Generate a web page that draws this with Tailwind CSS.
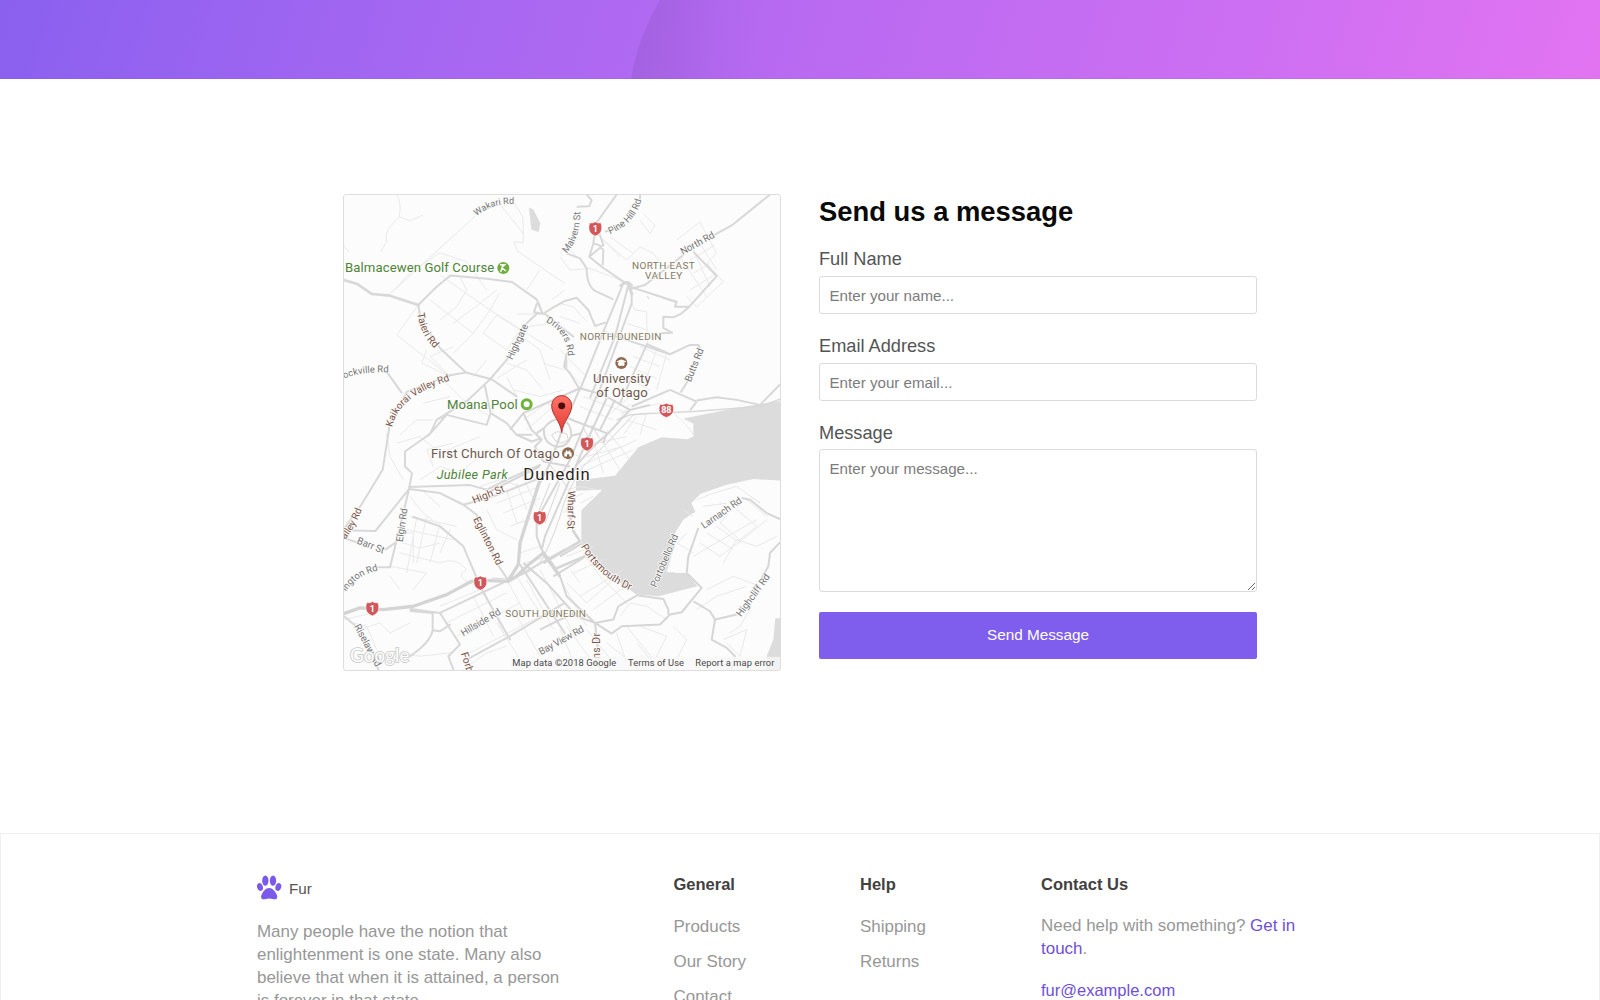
<!DOCTYPE html>
<html lang="en">
<head>
<meta charset="utf-8">
<title>Fur - Contact</title>
<script src="https://cdn.jsdelivr.net/npm/@tailwindcss/browser@4"></script>
</head>
<body class="h-screen overflow-hidden bg-white font-['Liberation_Sans',Arial,sans-serif] text-[#545454]">
<header class="h-[79px] w-full bg-[linear-gradient(107deg,#8a60ef_0%,#a567f1_27%,#b86af1_50%,#cd6ff2_78%,#e274f1_100%)]">
  <svg class="block h-full w-full" viewBox="0 0 1600 79">
    <defs><linearGradient id="arc" gradientUnits="userSpaceOnUse" x1="640" y1="0" x2="770" y2="8"><stop offset="0" stop-color="#8f58c8" stop-opacity=".36"/><stop offset=".25" stop-color="#8f58c8" stop-opacity=".3"/><stop offset=".6" stop-color="#8f58c8" stop-opacity=".1"/><stop offset="1" stop-color="#8f58c8" stop-opacity="0"/></linearGradient></defs>
    <path d="M660 0Q638 37 631 79H780V0Z" fill="url(#arc)"/>
    <path d="M0 78.500H1600" stroke="#8050b0" stroke-opacity=".1"/>
  </svg>
</header>
<main class="mx-auto flex h-[754px] w-[914px] gap-[38px] pt-[115px]">
  <div class="h-[477px] w-[438px] shrink-0 overflow-hidden rounded-[3px] border border-[#dedede] bg-[#fcfcfc]">
  <svg class="block h-full w-full font-[Roboto,sans-serif]" viewBox="12 14.500 1308 1427" preserveAspectRatio="none">
    <defs>
      <g id="shield"><path d="M-17-18Q-8-16 0-21Q8-16 17-18Q21-8 19 3Q16 16 0 22Q-16 16-19 3Q-21-8-17-18Z" fill="#d1575a" stroke="#fff" stroke-width="2"/></g>
      <path id="wakari" d="M410 78Q458 36 528 42"/><path id="taieri" d="M232 370Q242 446 300 490"/>
      <path id="drivers" d="M617 396Q680 425 684 500"/><path id="kaik" d="M156 712Q178 612 350 566"/>
      <path id="malvern" d="M20 190Q66 138 60 50"/><path id="pine" d="M150 132Q232 98 247 16"/>
      <path id="ports" d="M62 350Q118 450 230 490"/><path id="elley" d="M16 330Q54 280 74 216"/>
      <path id="ockville" d="M12 566Q70 543 150 548"/><path id="ington" d="M18 486Q48 436 124 420"/>
      <linearGradient id="pin" x2="0" y2="1"><stop stop-color="#ff7468"/><stop offset="1" stop-color="#e23d36"/></linearGradient>
    </defs>
    <!-- harbour and reservoirs -->
    <g fill="#dcdcdc">
      <path d="M1320 633L1200 652L1030 686L1060 702V740L1042 748L965 742L895 772L825 858L708 872V903L787 900L724 962V1058Q735 1088 800 1150L888 1214L955 1220L1072 1190L1038 1150H1005L1005 1030L1030 990L1066 966L1054 940L1082 912L1160 885L1240 868L1320 872Z"/>
      <path d="M567 52L580 58L601 99L596 126L574 119Z"/><path d="M1320 1286H1306L1300 1350L1280 1400V1444H1320Z"/>
      <path d="M674 510l8-4v28l-8-4z"/><path d="M922 317l7 6-2 4-7-6z"/>
    </g>
    <path d="M1040 1148L980 1148Q1010 1036 1048 975" fill="#fcfcfc"/>
    <!-- residential streets -->
    <g fill="none" stroke="#e9e9e9" stroke-width="3">
      <path d="M170 13Q185 40 178 80L150 110Q135 125 140 155L122 185M178 80L210 92L248 75M12 168L26 185M405 78L150 312M150 312L220 240L300 188L380 215L440 300M470 30L550 130L548 80L510 20M550 130V158L522 155L532 182L600 230L674 280M300 255L450 360L640 480M235 345L170 435L330 560M270 330L400 430L450 360L478 310M400 430L340 490M340 400L420 340L470 300M300 390L350 350L380 300L360 262M470 375L540 420L500 480L430 430ZM530 372L600 372M560 410L640 400M545 440L600 480L630 570M500 520L560 540L610 600M470 565L560 510M560 300L600 240M635 330L674 300M260 480L245 520L330 560L270 500L340 470M440 510L400 560M500 560L530 620M610 520L674 540"/>
      <path d="M320 580L380 640L450 680M250 640L330 620M520 600L600 620L670 600M550 690L620 640L674 660M560 720L674 620M180 735L230 690L280 690"/>
      <path d="M140 730L150 800L190 870M170 760L240 740L300 790L420 740M240 870L300 830L360 850L440 780L500 800M280 830L260 780L340 760M420 890L480 870L540 890M210 920L240 960L300 1010M250 905L300 950M210 980L350 1010M200 1020L340 1050M190 1060L240 1075L300 1060M180 1090L300 1120M230 985L200 1150M260 980L230 1120M300 1000L270 1120M330 1020L300 1090M150 1130L260 1150L220 1200M170 1030H220V1120M150 1160L180 1200M300 1120Q350 1100 380 1140Q340 1160 400 1185M440 960L470 1020L530 1050M500 900L530 1000L570 990M530 880L560 960M555 875L590 950M470 940L600 890M490 970L600 925M510 1010L590 980M540 1090L600 1070M550 1120L630 1100"/>
      <path d="M300 1250L420 1200M320 1300L500 1210M350 1340L540 1240M370 1400L640 1260M400 1220L460 1340M430 1200L500 1350M500 1170L560 1280M530 1160L600 1270M560 1170L640 1320M600 1140L700 1330M640 1130L740 1310M520 1260L600 1400M470 1300L560 1440M370 1440L440 1390L500 1370M150 1420Q200 1390 240 1400L330 1390M12 1290L100 1270M60 1320L120 1300L150 1330L210 1300M40 1300L80 1310L110 1380"/>
    </g>
    <g fill="none" stroke="#e9e9e9" stroke-width="3" transform="translate(660 0)">
      <path d="M120 140L200 210L240 170L280 190L310 230M250 70L285 105L270 130L240 90M130 150L180 200M150 140L220 190M350 150L420 95L470 190L440 220L490 275L410 350L380 320M370 170L440 140M390 210L465 165M400 250L450 220M390 300L470 250M400 180L450 290M420 160L470 240M360 200L440 320M240 300L350 340M0 200L30 240L90 235L180 270M50 200L20 170M0 340L40 350L80 395M0 380L60 400M215 340L225 360L260 365L262 470M200 400L262 420M240 470L330 510M220 500L300 530M210 530L290 565M190 560L270 600M0 480L80 560M10 530L70 590M290 480L250 590M320 490L290 600M70 620L190 665M60 650L160 690M210 640L160 720M140 680L210 620M180 670L300 640M200 690L290 720M230 680L190 735M260 670L240 735M340 670Q380 700 400 735"/>
    </g>
    <g fill="none" stroke="#e8e8e8" stroke-width="3" transform="translate(660 720)">
      <path d="M60 110L230 30M80 80L190 50M70 50L200 20M60 130L220 60M110 10L180 120M140 0L210 90M95 15L130 130M20 380L100 350M40 430L130 390M20 460L80 520L160 450M60 500L190 420M100 540L210 460M70 370L120 440L200 520M30 420L60 460M180 560L210 520L260 530L320 570M200 590L280 690M170 610L200 700M240 590L320 620L280 700L230 640M140 640L240 720M340 590L380 630L350 690M80 600L160 700M410 540L470 500L560 470M440 480L520 440L600 470L570 530L520 560M400 380L450 350L520 310L590 270M420 340L480 380L560 320L620 270M440 310L520 360M470 290L540 340M520 230L590 290L540 330L480 280ZM560 210L620 260M410 210L460 190L530 170L600 220L570 200M430 230L500 220M400 260L370 240M380 310L350 340L400 370M490 400L530 330L590 350L650 320M510 610L540 590L570 540M490 630L560 600L540 680L500 640M0 600L50 720M20 590L100 700"/>
      <path d="M60 220L100 200M20 180L60 170L110 180M10 250L50 200L70 190M0 60L60 80"/>
    </g>
    <!-- arterial roads -->
    <g fill="none" stroke="#d8d8d8" stroke-width="6" stroke-linejoin="round" stroke-linecap="round">
      <path d="M12 270L52 282L96 312L150 317L235 345" stroke-width="8"/>
      <path d="M235 345L290 290L332 256L440 266L516 276L590 328L608 372L640 352L674 333L710 323L745 360L765 408L795 398M235 345L242 390L300 475L378 548L455 568L530 620M378 548L330 556L200 606L150 700L128 840L64 945L12 1018M138 543L185 608M590 342L582 366L608 372L596 340M590 372L560 400L500 510L450 568L385 630L290 690L270 732L195 785V830L216 850L207 898L106 1024L12 1022M615 372L700 440M435 590L452 670L440 705L320 675L290 690M452 670L500 700L530 735L575 735M320 675L270 732"/>
      <path d="M207 892L390 886L440 900L500 870L600 825M207 898L300 910L370 945L460 920L600 865M370 945L410 975L470 1120L500 1165M220 982L300 1010L370 1070L425 1200L510 1350M207 898L190 970L150 1133H108M136 1080L165 1060M12 1045L50 1058M212 1258L300 1270L360 1365L325 1400L340 1440M278 1270V1322L300 1325L330 1305M300 1270L550 1150L674 1080M212 1258V1264L278 1270M278 1322Q270 1360 210 1400M380 1410L510 1340L674 1240M12 1280L60 1320L115 1440M540 1125L674 1330"/>
    </g>
    <g fill="none" stroke="#d8d8d8" stroke-width="6" stroke-linejoin="round" transform="translate(660 0)">
      <path d="M50 50L88 48L95 30L80 13M170 13L108 100L100 160L88 200L125 230L215 292L350 335L345 350L388 350L470 258L400 185M100 160L118 165L130 180L128 226M88 200L130 165L118 130M20 190L60 205L80 235Q80 290 110 305L160 328M210 297L255 285L370 195M462 135L515 106L630 13M388 350L365 370L340 382L310 380V414L336 428L300 430M130 425L215 455L330 493L390 465H415L420 475M330 493L260 462M362 608L385 570M262 460L180 640M330 600L410 635M190 280L130 425L60 600M205 285L165 440L90 625M215 310L215 340L110 625M410 635L390 662M215 650L330 600M410 632L470 622L530 630L600 645L660 584M240 13L240 30M135 125L150 120M20 490L12 530L30 550L60 600"/>
      <path d="M170 690L210 675L245 672L400 665L600 650L660 628" stroke-width="4"/>
      <path d="M180 290Q200 265 217 290M205 285L217 315" stroke-width="9"/>
    </g>
    <!-- city centre -->
    <g fill="none" stroke="#d6d6d6" stroke-width="6" stroke-linejoin="round" transform="translate(390 480)">
      <path d="M330 115L280 230L245 330L210 400M385 125L300 330L200 510L200 560L215 600M410 145L325 330L225 560L215 600L260 660M435 150L390 240M540 165L480 180L410 255L380 280L320 345L290 410"/>
      <path d="M330 115L160 190L120 240M330 115L400 135L480 180M160 190L185 240L215 270L195 290L205 310L245 325M140 255L185 275L215 265M275 195L310 212L410 250L400 280M222 235Q245 205 275 208Q305 220 304 258Q290 295 258 290Q218 280 222 235ZM222 235L200 250M304 258L335 250M258 290L245 330M205 310L220 335L300 350M60 425L210 350"/>
      <path d="M245 255L262 245L290 252L295 270L275 280L255 272ZM275 208V250M340 235L365 280M365 225L385 260M240 345L290 410M225 370L290 390M200 500L240 400M270 400L225 520" stroke-width="3"/>
      <path d="M300 500L310 545L330 575L220 640M345 620L250 660" stroke-width="8"/>
      <path d="M540 190L490 195L420 270L340 350Q290 420 270 500Q240 590 210 640Q150 700 65 685" stroke-width="3"/>
    </g>
    <g fill="none" stroke="#d6d6d6" stroke-width="6" stroke-linejoin="round" transform="translate(660 720)">
      <path d="M-110 400L-40 460L50 560L105 580L160 570L175 530L235 495M65 342L0 380M70 385L-20 440M-55 370L0 440L20 500L105 580L155 612L185 590L300 585L330 555L365 548L425 475L380 430M235 498L310 508L325 540L325 555M400 515L450 545L465 570L455 630L500 655L525 680L515 720M465 570L530 555M380 430L385 380L415 295M545 205L570 210L620 250L660 268M660 338L630 370L625 410L600 455M-60 600L0 570L50 550M105 580L120 720"/>
    </g>
    <!-- motorway -->
    <path d="M12 1272L60 1255L130 1260L220 1250L320 1215L395 1175L430 1172L505 1175L530 1160L560 1130L610 1090L660 1160M505 1172L535 1125L540 1060L600 870" fill="none" stroke="#d4d4d4" stroke-width="10" stroke-linejoin="round"/>

    <!-- road labels -->
    <g font-size="29.500" fill="#757575" stroke="#fcfcfc" stroke-width="5" paint-order="stroke" stroke-linejoin="round">
      <text font-size="27" stroke-width="4"><textPath href="#wakari">Wakari Rd</textPath></text>
      <text font-size="28.500"><textPath href="#drivers">Drivers Rd</textPath></text>
      <text font-size="28.500"><textPath href="#ockville">ockville Rd</textPath></text>
      <text transform="translate(517 511) rotate(-65)" textLength="114">Highgate</text>
      <g transform="translate(660 0)">
        <text font-size="28.500"><textPath href="#malvern">Malvern St</textPath></text>
        <text font-size="28.500"><textPath href="#pine">Pine Hill Rd</textPath></text>
        <text transform="translate(368 195) rotate(-29)" textLength="112">North Rd</text>
        <text transform="translate(392 578) rotate(-68)" textLength="106">Butts Rd</text>
      </g>
      <g transform="translate(0 720)">
        <text transform="translate(188 338) rotate(-82)" textLength="102">Elgin Rd</text>
        <text transform="translate(49 341) rotate(21)" textLength="86">Barr St</text>
        <text font-size="28"><textPath href="#ington">ington Rd</textPath></text>
        <text transform="translate(42 590) rotate(62)" textLength="140">Riselaw Rd</text>
        <text transform="translate(370 621) rotate(-31)" textLength="134">Hillside Rd</text>
        <text transform="translate(603 677) rotate(-29)" textLength="150">Bay View Rd</text>
      </g>
      <g transform="translate(660 720)">
        <text transform="translate(289 475) rotate(-67)" textLength="170">Portobello Rd</text>
        <text transform="translate(432 298) rotate(-35)" textLength="141">Larnach Rd</text>
        <text transform="translate(543 563) rotate(-54)" textLength="150">Highcliff Rd</text>
      </g>
    </g>
    <g font-size="31" fill="#7a5547" stroke="#fcfcfc" stroke-width="5" paint-order="stroke" stroke-linejoin="round">
      <text><textPath href="#taieri">Taieri Rd</textPath></text>
      <text font-size="29.500"><textPath href="#kaik">Kaikorai Valley Rd</textPath></text>
      <g transform="translate(0 720)">
        <text transform="translate(402 222) rotate(-22)" textLength="101">High St</text>
        <text transform="translate(399 268) rotate(63)" textLength="158">Eglinton Rd</text>
        <text font-size="30"><textPath href="#elley">alley Rd</textPath></text>
        <text transform="translate(362 672) rotate(72)">Forbury</text>
      </g>
      <g transform="translate(660 720)">
        <text transform="translate(24 183) rotate(91)" textLength="116">Wharf St</text>
        <text><textPath href="#ports">Portsmouth Dr</textPath></text>
        <text transform="translate(121 706) rotate(-90)" textLength="96">ens Dr</text>
      </g>
    </g>
    <!-- district labels -->
    <g font-size="30" fill="#857a61" stroke="#fcfcfc" stroke-width="4" paint-order="stroke">
      <text x="876" y="236" textLength="188">NORTH EAST</text><text x="915" y="268" textLength="112">VALLEY</text>
      <text x="719" y="450" textLength="245">NORTH DUNEDIN</text><text x="496" y="1283" textLength="242">SOUTH DUNEDIN</text>
    </g>
    <!-- points of interest -->
    <g font-size="39.500" stroke="#fcfcfc" stroke-width="5" paint-order="stroke">
      <g fill="#4f8438"><text x="15" y="247" textLength="448">Balmacewen Golf Course</text><text x="321" y="657" textLength="212">Moana Pool</text>
      <text x="290" y="869" font-size="38" font-style="italic" textLength="213">Jubilee Park</text></g>
      <g fill="#6f594d"><text x="759" y="580" textLength="173">University</text><text x="769" y="620" textLength="154">of Otago</text><text x="273" y="804" textLength="386">First Church Of Otago</text></g>
      <text x="550" y="872" font-size="50" fill="#2b2320" textLength="199">Dunedin</text>
    </g>
    <circle cx="490" cy="234" r="18" fill="#6fae3c"/><path d="M480 224h9l-3 10 12 9M486 233l-4 13M497 222l-9 8" fill="none" stroke="#fff" stroke-width="4"/>
    <circle cx="560" cy="643" r="13.500" fill="#fff" stroke="#70b23c" stroke-width="9"/>
    <circle cx="844" cy="519" r="18" fill="#8d6a50"/><path d="M832 515l12-5 13 5-13 4zM836 519v7h16v-7" fill="#fff" stroke="#fff" stroke-width="3"/>
    <circle cx="684" cy="790" r="18" fill="#8d6a50"/><path d="M673 800v-12h4v-6h4v6q3-12 6 0v-6h4v6h4v12h-7v-7h-7v7z" fill="#fff"/>
    <g fill="#fff" font-size="27" font-weight="700" text-anchor="middle">
      <use href="#shield" x="766" y="116"/><text x="766" y="125">1</text>
      <use href="#shield" transform="translate(979 661) scale(1.13 1)"/><text x="979" y="670">88</text>
      <use href="#shield" x="599" y="984"/><text x="599" y="993">1</text>
      <use href="#shield" x="421" y="1180"/><text x="421" y="1189">1</text>
      <use href="#shield" x="97" y="1257"/><text x="97" y="1266">1</text>
      <use href="#shield" x="741" y="762"/><text x="741" y="771">1</text>
    </g>
    <path d="M665 728C662 694 635 676 635 647A30 30 0 0 1 695 647C695 676 668 694 665 728Z" fill="url(#pin)" stroke="#b3312c" stroke-width="3"/><circle cx="665" cy="648" r="10.500" fill="#4a0d0b"/>
    <!-- attribution -->
    <rect x="512" y="1402" width="808" height="42" fill="#f7f7f7" fill-opacity=".8"/>
    <text x="30" y="1419" font-size="56" fill="#fff" stroke="#c8c8c8" stroke-width="5" paint-order="stroke" textLength="178" class="font-[Lato,sans-serif]">Google</text>
    <g font-size="28" fill="#484848"><text x="517" y="1430" textLength="312">Map data ©2018 Google</text><text x="864" y="1430" textLength="168">Terms of Use</text><text x="1066" y="1430" textLength="237">Report a map error</text></g>
  </svg>
  </div>
  <form class="flex w-[438px] flex-col">
    <h1 class="h-[53px] pt-[1px] text-[27.400px] leading-[34px] font-bold text-[#0a0a0a]">Send us a message</h1>
    <label for="name" class="h-[29px] text-[18.200px] leading-[24px]">Full Name</label>
    <input id="name" class="mb-[20px] h-[38px] w-full rounded-[3px] border border-[#dbdbdb] px-[9.500px] text-[15.150px] placeholder:text-[#7c7c7c]" placeholder="Enter your name...">
    <label for="email" class="h-[29px] text-[18.200px] leading-[24px]">Email Address</label>
    <input id="email" class="mb-[20px] h-[38px] w-full rounded-[3px] border border-[#dbdbdb] px-[9.500px] text-[15.150px] placeholder:text-[#7c7c7c]" placeholder="Enter your email...">
    <label for="message" class="h-[28px] text-[18.200px] leading-[24px]">Message</label>
    <textarea id="message" class="h-[143px] w-full shrink-0 rounded-[3px] border border-[#dbdbdb] px-[9.500px] py-[7px] text-[15.150px] leading-[23px] placeholder:text-[#7c7c7c]" placeholder="Enter your message..."></textarea>
    <button type="button" class="mt-[20px] h-[47px] w-full shrink-0 rounded-[2px] bg-[#7f5eee] text-[15.300px] text-white">Send Message</button>
  </form>
</main>
<footer class="flex h-[167px] overflow-hidden border border-b-0 border-[#f0f0f0] pt-[39px] pl-[256px] text-[16.950px] leading-[23px] text-[#979797]">
  <section class="w-[416.500px]">
    <div class="flex h-[30px] items-center gap-[7px] text-[15.200px] text-[#545454]">
      <svg class="h-[26px] w-[25px]" viewBox="0 0 75 78" fill="#7b5aeb"><ellipse cx="25" cy="17" rx="9.500" ry="15.500"/><ellipse cx="48" cy="17" rx="9.500" ry="15.500"/><ellipse cx="9" cy="36" rx="8.500" ry="12" transform="rotate(-18 9 36)"/><ellipse cx="64" cy="36" rx="8.500" ry="12" transform="rotate(18 64 36)"/><path d="M36.500 39C47 39 55 49 60 61C63 70 58 75 50 73Q37 68 24 73C15 75 10 70 13 61C18 49 26 39 36.500 39Z"/></svg>
      <span>Fur</span>
    </div>
    <p class="mt-[17px] whitespace-nowrap">Many people have the notion that<br>enlightenment is one state. Many also<br>believe that when it is attained, a person<br>is forever in that state.</p>
  </section>
  <nav class="w-[186.500px]"><h2 class="mb-[19px] text-[16.500px] font-bold text-[#414141]">General</h2><ul class="space-y-[12px]"><li>Products</li><li>Our Story</li><li>Contact</li></ul></nav>
  <nav class="w-[181px]"><h2 class="mb-[19px] text-[16.500px] font-bold text-[#414141]">Help</h2><ul class="space-y-[12px]"><li>Shipping</li><li>Returns</li></ul></nav>
  <section class="w-[270px]"><h2 class="mb-[18px] text-[16.500px] font-bold text-[#414141]">Contact Us</h2><p>Need help with something? <a class="text-[#6f4fd9]">Get in<br>touch</a>.</p><a class="mt-[19px] block text-[16.500px] text-[#6f4fd9]">fur@example.com</a></section>
</footer>
</body>
</html>
